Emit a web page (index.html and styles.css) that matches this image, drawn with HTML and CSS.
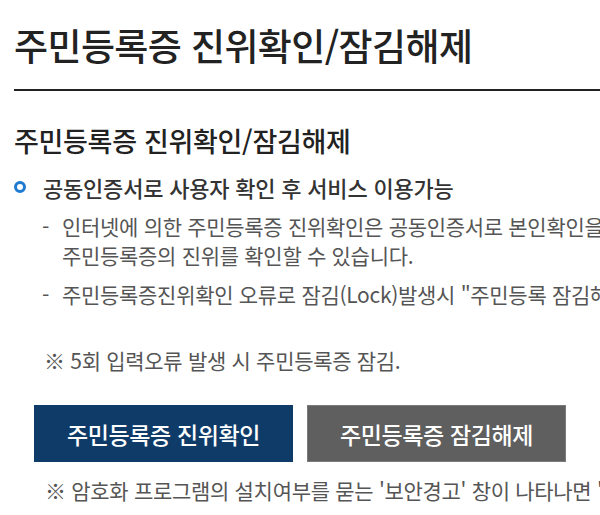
FILE: index.html
```html
<!DOCTYPE html>
<html lang="ko">
<head>
<meta charset="utf-8">
<title>주민등록증 진위확인/잠김해제</title>
<link rel="stylesheet" href="styles.css">
</head>
<body>
<div class="page">
  <h1 class="title">주민등록증 진위확인/잠김해제</h1>
  <h2 class="subtitle">주민등록증 진위확인/잠김해제</h2>
  <div class="bullet"><span class="ring"></span><span class="bullet-text">공동인증서로 사용자 확인 후 서비스 이용가능</span></div>
  <ul class="list">
    <li class="item"><span class="dash">-</span><span class="item-text">인터넷에 의한 주민등록증 진위확인은 공동인증서로 본인확인을 한 후<br>주민등록증의 진위를 확인할 수 있습니다.</span></li>
    <li class="item"><span class="dash">-</span><span class="item-text">주민등록증진위확인 오류로 잠김(Lock)발생시 "주민등록 잠김해제" 버튼을 클릭하여 잠김해제 하시기 바랍니다.</span></li>
  </ul>
  <p class="note">※ 5회 입력오류 발생 시 주민등록증 잠김.</p>
  <div class="buttons">
    <button class="btn btn-blue">주민등록증 진위확인</button>
    <button class="btn btn-gray">주민등록증 잠김해제</button>
  </div>
  <p class="note note-bottom">※ 암호화 프로그램의 설치여부를 묻는 '보안경고' 창이 나타나면 '예'를 선택하여 주십시오.</p>
</div>
</body>
</html>
```
FILE: styles.css
```css
html, body {
  margin: 0;
  padding: 0;
  background: #ffffff;
}
body {
  width: 600px;
  height: 515px;
  overflow: hidden;
  font-family: "Noto Sans CJK KR", "Noto Sans", sans-serif;
  color: #555555;
}
.page {
  padding-left: 14px;
  width: 900px;
}
.title {
  margin: 0;
  padding-top: 23px;
  padding-bottom: 22px;
  font-size: 37px;
  line-height: 44px;
  font-weight: 500;
  letter-spacing: -0.6px;
  color: #222222;
  border-bottom: 2px solid #222222;
}
.subtitle {
  margin: 33px 0 0;
  font-size: 27px;
  line-height: 34px;
  font-weight: 500;
  letter-spacing: -0.3px;
  color: #222222;
}
.bullet {
  margin-top: 15px;
  display: flex;
  align-items: center;
  gap: 17px;
  height: 28px;
}
.ring {
  width: 6px;
  height: 6px;
  border: 3px solid #1f7ad0;
  border-radius: 50%;
  flex: none;
}
.bullet-text {
  font-size: 22px;
  line-height: 28px;
  font-weight: 500;
  letter-spacing: -0.2px;
  color: #333333;
  white-space: nowrap;
}
.list {
  list-style: none;
  margin: 11px 0 0;
  padding: 0 0 0 28px;
  display: flex;
  flex-direction: column;
  gap: 10px;
}
.item {
  display: flex;
  gap: 13px;
  font-size: 21px;
  line-height: 29px;
  letter-spacing: -0.3px;
  white-space: nowrap;
}
.dash {
  flex: none;
}
.note {
  margin: 37px 0 0 30px;
  font-size: 21px;
  line-height: 29px;
  letter-spacing: -0.3px;
  white-space: nowrap;
}
.buttons {
  margin: 30px 0 0 20px;
  display: flex;
  gap: 14px;
}
.btn {
  width: 259px;
  height: 57px;
  border: 0;
  padding: 0;
  font-family: "Noto Sans CJK KR", "Noto Sans", sans-serif;
  font-size: 23px;
  font-weight: 500;
  letter-spacing: -0.4px;
  color: #ffffff;
}
.btn-blue {
  background: #0f3b68;
}
.btn-gray {
  background: #5f5f5f;
  border: 1px solid #7a7a7a;
}
.note-bottom {
  margin: 14px 0 0 31px;
}
```
